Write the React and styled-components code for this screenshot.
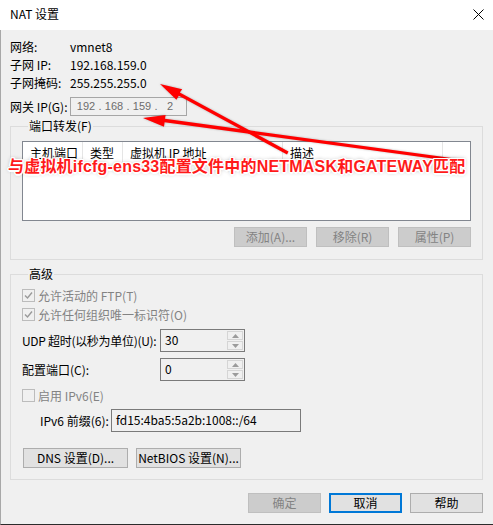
import styled, { createGlobalStyle } from "styled-components"

const Global = createGlobalStyle`
  html, body {
    margin: 0;
    padding: 0;
    background: #f0f0f0;
  }
  body {
    font-family: "Noto Sans CJK SC", "Noto Sans", sans-serif;
    font-size: 12px;
    color: #000;
  }
`;

const Window = styled.div`
  position: relative;
  width: 493px;
  height: 525px;
  display: flex;
  flex-direction: column;
  overflow: hidden;
`;

const TitleBar = styled.div`
  height: 30px;
  flex: none;
  background: #fff;
  display: flex;
  align-items: center;
  justify-content: space-between;
  padding: 0 9px 2px 10px;
  box-sizing: border-box;
  font-size: 12px;
  line-height: 16px;
`;

const Body = styled.div`
  flex: 1;
  background: #f0f0f0;
  border-left: 1px solid #a8a8a8;
  border-bottom: 1px solid #2b2b2b;
  padding: 8px 10px 0 9px;
  display: flex;
  flex-direction: column;
`;

const InfoRow = styled.div`
  display: flex;
  align-items: center;
  height: ${p => p.h}px;
  margin-top: ${p => p.mt || 0}px;
  line-height: 16px;
`;

const InfoLabel = styled.span`
  width: 60px;
  flex: none;
`;

const IpBox = styled.div`
  width: 117px;
  height: 19px;
  box-sizing: border-box;
  border: 1px solid #a6a6a6;
  display: flex;
  align-items: center;
  padding: 0 0 0 4px;
  color: #6d6d6d;
  font-family: "Liberation Sans", sans-serif;
  font-size: 11px;
  line-height: 15px;
`;

const Octet = styled.span`
  width: ${p => p.w || 22}px;
  flex: none;
  text-align: center;
`;

const Group = styled.fieldset`
  margin: ${p => p.mt}px 0 0 0;
  padding: ${p => p.pt}px 11px ${p => p.pb}px 11px;
  border: 1px solid #dcdcdc;
  min-width: 0;
  legend {
    margin-left: 6px;
    padding: 0 1px;
    line-height: 16px;
    height: 16px;
  }
`;

const ListBox = styled.div`
  height: 80px;
  box-sizing: border-box;
  border: 1px solid #828790;
  background: #fff;
`;

const Header = styled.div`
  display: flex;
  height: 21px;
  line-height: 21px;
`;

const HeaderCell = styled.div`
  width: ${p => p.w}px;
  box-sizing: border-box;
  padding-left: 7px;
  white-space: nowrap;
  border-right: ${p => (p.last ? "none" : "1px solid #e5e5e5")};
`;

const ButtonRow = styled.div`
  display: flex;
  justify-content: ${p => p.align || "flex-end"};
  gap: ${p => p.gap || 9}px;
  margin-top: ${p => p.mt}px;
  padding-left: ${p => p.pl || 0}px;
`;

const Button = styled.button`
  width: ${p => p.w || 73}px;
  height: 20px;
  box-sizing: border-box;
  margin: 0;
  padding: 0;
  font-family: inherit;
  font-size: 12px;
  line-height: 16px;
  white-space: nowrap;
  background: ${p => (p.disabled ? "#cccccc" : "#e1e1e1")};
  border: ${p => (p.primary ? "2px solid #0078d7" : p.disabled ? "1px solid #bfbfbf" : "1px solid #adadad")};
  color: ${p => (p.disabled ? "#838383" : "#000")};
`;

const CheckRow = styled.div`
  display: flex;
  align-items: center;
  gap: 3px;
  height: 19px;
  margin-top: ${p => p.mt || 0}px;
  color: #838383;
  line-height: 16px;
`;

const Box = styled.span`
  width: 13px;
  height: 13px;
  box-sizing: border-box;
  border: 1px solid #bcbcbc;
  background: #f0f0f0;
  display: flex;
`;

const FieldRow = styled.div`
  display: flex;
  align-items: center;
  margin-top: ${p => p.mt}px;
  padding-left: ${p => p.pl || 0}px;
  line-height: 16px;
`;

const FieldLabel = styled.span`
  width: ${p => p.w}px;
  flex: none;
  white-space: nowrap;
  letter-spacing: ${p => p.ls || 0}px;
`;

const Spinner = styled.div`
  width: 85px;
  height: 23px;
  box-sizing: border-box;
  border: 1px solid #7a7a7a;
  display: flex;
  background: #f0f0f0;
`;

const SpinValue = styled.div`
  flex: 1;
  padding: 2px 0 0 4px;
  font-size: 12px;
  line-height: 16px;
`;

const SpinButtons = styled.div`
  width: 16px;
  display: flex;
  flex-direction: column;
  gap: 1px;
  padding: 1px 1px 1px 0;
`;

const SpinButton = styled.div`
  flex: 1;
  border: 1px solid #d5d5d5;
  background: #f0f0f0;
  display: flex;
  align-items: center;
  justify-content: center;
`;

const TextBox = styled.div`
  width: 190px;
  height: 23px;
  box-sizing: border-box;
  border: 1px solid #7a7a7a;
  background: #f0f0f0;
  padding: 2px 0 0 4px;
  font-size: 12px;
  line-height: 16px;
`;

const Overlay = styled.svg`
  position: absolute;
  left: 0;
  top: 0;
  pointer-events: none;
  filter: drop-shadow(0 0 1px rgba(0, 0, 0, 0.25));
`;

const Callout = styled.div`
  position: absolute;
  left: 8px;
  top: 157px;
  white-space: nowrap;
  color: #ff1a1a;
  font-family: "Liberation Sans", "Noto Sans CJK SC", sans-serif;
  font-weight: 700;
  font-size: 16px;
  line-height: 20px;
  letter-spacing: 0.2px;
  text-shadow:
    1.5px 0 0 #fff, -1.5px 0 0 #fff, 0 1.5px 0 #fff, 0 -1.5px 0 #fff,
    1px 1px 0 #fff, -1px -1px 0 #fff, 1px -1px 0 #fff, -1px 1px 0 #fff,
    0 0 4px rgba(0, 0, 0, 0.45);
`;

function Check({ checked }) {
  return (
    <Box>
      {checked && (
        <svg width="11" height="11" viewBox="0 0 11 11">
          <polyline points="2,5.5 4.5,8 9,2.5" fill="none" stroke="#9a9a9a" strokeWidth="1.4" />
        </svg>
      )}
    </Box>
  );
}

function Arrow({ d }) {
  return <path d={d} fill="#ff0000" />;
}

function Spin({ value }) {
  return (
    <Spinner>
      <SpinValue>{value}</SpinValue>
      <SpinButtons>
        <SpinButton>
          <svg width="7" height="4"><polygon points="0,4 7,4 3.5,0" fill="#9b9b9b" /></svg>
        </SpinButton>
        <SpinButton>
          <svg width="7" height="4"><polygon points="0,0 7,0 3.5,4" fill="#9b9b9b" /></svg>
        </SpinButton>
      </SpinButtons>
    </Spinner>
  );
}

export default function App() {
  return (
    <Window>
      <Global />
      <TitleBar>
        <span>NAT 设置</span>
        <svg width="11" height="11" viewBox="0 0 11 11">
          <path d="M0.5 0.5 L10.5 10.5 M10.5 0.5 L0.5 10.5" stroke="#000" strokeWidth="1" />
        </svg>
      </TitleBar>
      <Body>
        <InfoRow h={18}><InfoLabel>网络:</InfoLabel><span>vmnet8</span></InfoRow>
        <InfoRow h={17}><InfoLabel>子网 IP:</InfoLabel><span>192.168.159.0</span></InfoRow>
        <InfoRow h={19}><InfoLabel>子网掩码:</InfoLabel><span>255.255.255.0</span></InfoRow>
        <InfoRow h={19} mt={5}>
          <InfoLabel>网关 IP(G):</InfoLabel>
          <IpBox>
            <Octet>192</Octet><Octet w={6}>.</Octet>
            <Octet>168</Octet><Octet w={6}>.</Octet>
            <Octet>159</Octet><Octet w={6}>.</Octet>
            <Octet>2</Octet>
          </IpBox>
        </InfoRow>

        <Group mt={2} pt={7} pb={12}>
          <legend>端口转发(F)</legend>
          <ListBox>
            <Header>
              <HeaderCell w={60}>主机端口</HeaderCell>
              <HeaderCell w={40}>类型</HeaderCell>
              <HeaderCell w={160}>虚拟机 IP 地址</HeaderCell>
              <HeaderCell w={160}>描述</HeaderCell>
              <HeaderCell w={27} last />
            </Header>
          </ListBox>
          <ButtonRow mt={6}>
            <Button disabled>添加(A)...</Button>
            <Button disabled>移除(R)</Button>
            <Button disabled>属性(P)</Button>
          </ButtonRow>
        </Group>

        <Group mt={6} pt={4} pb={11}>
          <legend>高级</legend>
          <CheckRow><Check checked />允许活动的 FTP(T)</CheckRow>
          <CheckRow><Check checked />允许任何组织唯一标识符(O)</CheckRow>
          <FieldRow mt={5}>
            <FieldLabel w={138} ls={-0.3}>UDP 超时(以秒为单位)(U):</FieldLabel>
            <Spin value="30" />
          </FieldRow>
          <FieldRow mt={6}>
            <FieldLabel w={138}>配置端口(C):</FieldLabel>
            <Spin value="0" />
          </FieldRow>
          <CheckRow mt={5}><Check />启用 IPv6(E)</CheckRow>
          <FieldRow mt={4} pl={18}>
            <FieldLabel w={71}>IPv6 前缀(6):</FieldLabel>
            <TextBox>fd15:4ba5:5a2b:1008::/64</TextBox>
          </FieldRow>
          <ButtonRow mt={16} pl={1} gap={8} align="flex-start">
            <Button w={105}>DNS 设置(D)...</Button>
            <Button w={105}>NetBIOS 设置(N)...</Button>
          </ButtonRow>
        </Group>

        <ButtonRow mt={13} gap={8}>
          <Button disabled>确定</Button>
          <Button primary>取消</Button>
          <Button>帮助</Button>
        </ButtonRow>
      </Body>

      <Overlay width="493" height="525" viewBox="0 0 493 525">
        <Arrow d="M287 154.5 L178.8 95.8 L176.4 99.8 L160 84 L182.2 89.2 L179.8 92.5 L288.5 151.5 Z" />
        <Arrow d="M462 162.5 L164.6 122.3 L164 126.8 L143 118 L165.6 114.9 L165 118.8 L462.5 159.5 Z" />
      </Overlay>
      <Callout>与虚拟机ifcfg-ens33配置文件中的NETMASK和GATEWAY匹配</Callout>
    </Window>
  );
}
